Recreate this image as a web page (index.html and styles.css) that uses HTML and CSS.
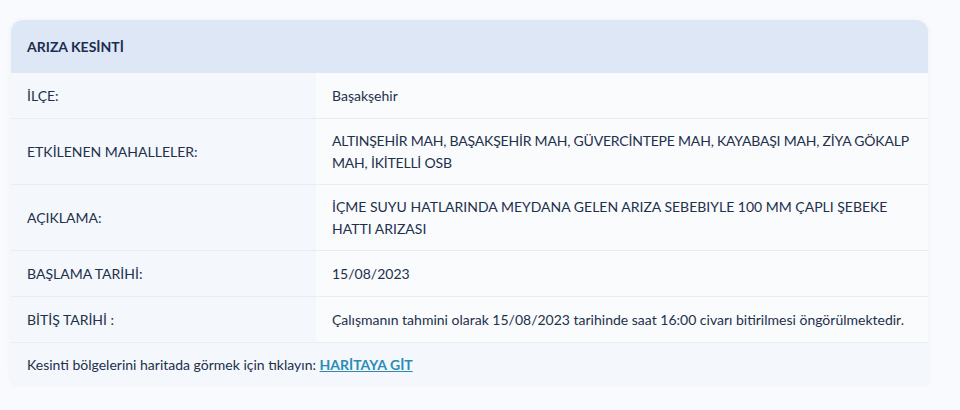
FILE: index.html
```html
<!DOCTYPE html>
<html lang="tr">
<head>
    <meta charset="UTF-8">
    <meta name="viewport" content="width=device-width, initial-scale=1.0">
    <title>Arıza Kesinti</title>
    <link rel="stylesheet" href="styles.css">
</head>
<body>
    <div class="outage-card">
        <div class="outage-header">ARIZA KESİNTİ</div>

        <table class="outage-table">
            <tr class="row-short">
                <td class="label">İLÇE:</td>
                <td class="value">Başakşehir</td>
            </tr>
            <tr>
                <td class="label">ETKİLENEN MAHALLELER:</td>
                <td class="value nowrap">ALTINŞEHİR MAH, BAŞAKŞEHİR MAH, GÜVERCİNTEPE MAH, KAYABAŞI MAH, ZİYA GÖKALP<br>MAH, İKİTELLİ OSB</td>
            </tr>
            <tr>
                <td class="label">AÇIKLAMA:</td>
                <td class="value">İÇME SUYU HATLARINDA MEYDANA GELEN ARIZA SEBEBIYLE 100 MM ÇAPLI ŞEBEKE<br>HATTI ARIZASI</td>
            </tr>
            <tr class="row-short">
                <td class="label">BAŞLAMA TARİHİ:</td>
                <td class="value">15/08/2023</td>
            </tr>
            <tr class="row-short">
                <td class="label">BİTİŞ TARİHİ :</td>
                <td class="value">Çalışmanın tahmini olarak 15/08/2023 tarihinde saat 16:00 civarı bitirilmesi öngörülmektedir.</td>
            </tr>
        </table>

        <div class="outage-footer">
            Kesinti bölgelerini haritada görmek için tıklayın: <a href="#">HARİTAYA GİT</a>
        </div>
    </div>
</body>
</html>
```

FILE: styles.css
```css
/* Page */
body, html {
    margin: 0;
    padding: 0;
    background-color: #f8fafd;
    font-family: 'Lato', 'Noto Sans', sans-serif;
    color: #22304b;
    font-size: 14px;
}

body {
    padding: 20px 32px 0 11px;
}

/* Card */
.outage-card {
    width: 917px;
    background-color: #f4f7fb;
    border-radius: 12px;
    overflow: hidden;
    box-shadow: 0 1px 6px rgba(40, 60, 100, 0.05);
}

.outage-header {
    background-color: #dee7f6;
    height: 53px;
    line-height: 53px;
    padding: 0 16px;
    font-weight: bold;
    color: #1d2d4f;
}

/* Rows */
.outage-table {
    width: 100%;
    border-collapse: collapse;
    table-layout: fixed; /* keep the label column at its width */
}

.outage-table td {
    height: 65px;
    padding: 0 16px;
    line-height: 22px;
    border-bottom: 1px solid #e9edf3;
    vertical-align: middle;
}

.outage-table .row-short td {
    height: 45px;
}

.outage-table .label {
    width: 273px;
    background-color: #f4f7fb;
}

.outage-table .value {
    background-color: #fafbfd;
    padding-right: 20px;
}

.outage-table .nowrap {
    white-space: nowrap;
    letter-spacing: -0.2px;
}

/* Footer */
.outage-footer {
    height: 44px;
    line-height: 44px;
    padding: 0 16px;
    background-color: #f4f7fb;
}

.outage-footer a {
    color: #2b8cb3;
    font-weight: bold;
}
```
